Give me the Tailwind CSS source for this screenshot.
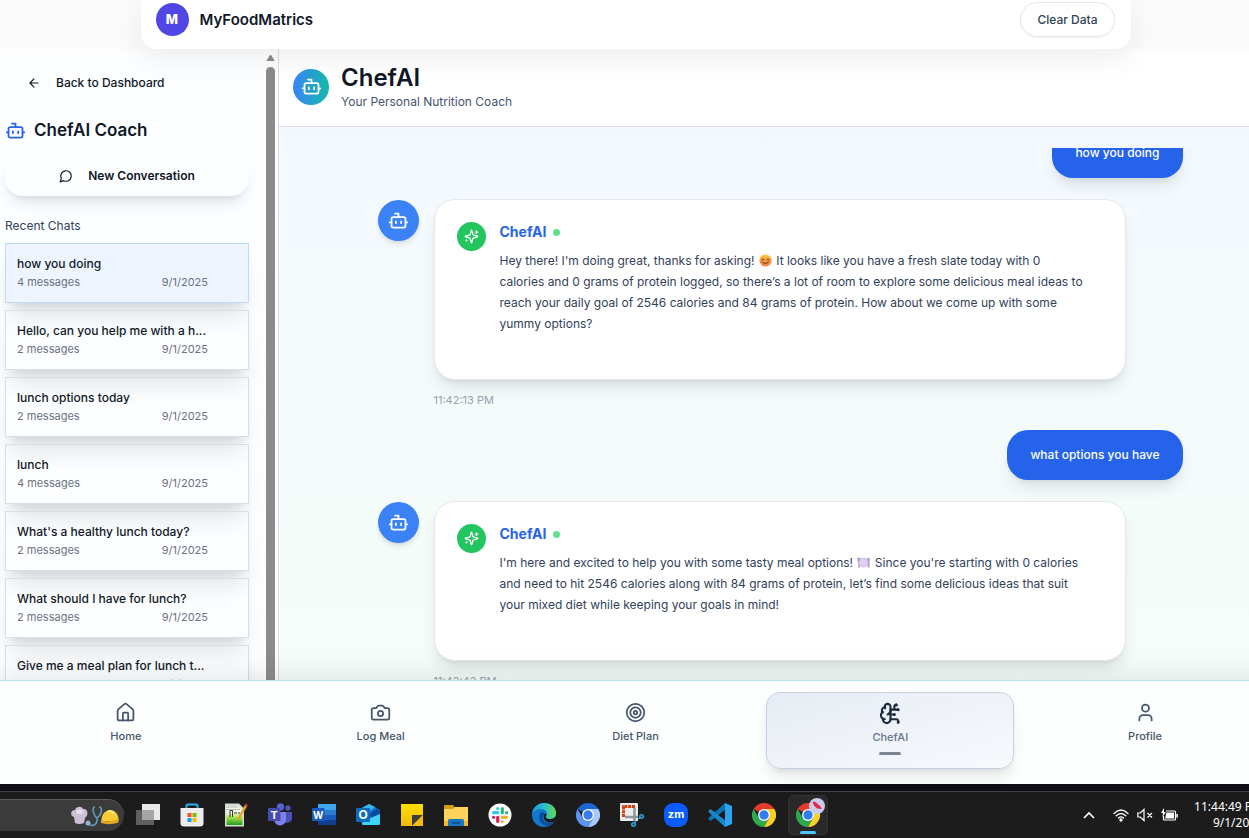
<!DOCTYPE html>
<html lang="en">
<head>
<meta charset="utf-8">
<title>MyFoodMatrics – ChefAI</title>
<script src="https://cdn.jsdelivr.net/npm/@tailwindcss/browser@4"></script>
</head>
<body class="h-screen overflow-hidden bg-white font-['Inter',sans-serif] text-xs text-gray-900">
<svg class="hidden" aria-hidden="true">
  <symbol id="bot" viewBox="0 0 24 24" fill="none" stroke="currentColor" stroke-width="2" stroke-linecap="round" stroke-linejoin="round"><path d="M12 8V4H8"/><rect x="4" y="8" width="16" height="12" rx="2"/><path d="M2 14h2M20 14h2M15 13v2M9 13v2"/></symbol>
  <symbol id="sparkles" viewBox="0 0 24 24" fill="none" stroke="currentColor" stroke-width="2" stroke-linecap="round" stroke-linejoin="round"><path d="M9.937 15.5A2 2 0 0 0 8.5 14.063l-6.135-1.582a.5.5 0 0 1 0-.962L8.5 9.936A2 2 0 0 0 9.937 8.5l1.582-6.135a.5.5 0 0 1 .963 0L14.063 8.5A2 2 0 0 0 15.5 9.937l6.135 1.581a.5.5 0 0 1 0 .964L15.5 14.063a2 2 0 0 0-1.437 1.437l-1.582 6.135a.5.5 0 0 1-.963 0z"/><path d="M20 3v4M22 5h-4M4 17v2M5 18H3"/></symbol>
  <symbol id="chrome" viewBox="0 0 24 24"><path fill="#e33b2e" d="M12 12 1.6 6A12 12 0 0 1 22.4 6H12z"/><path fill="#2da94f" d="M12 24A12 12 0 0 1 1.6 6l5.2 9L12 18l5.2-3z"/><path fill="#fdd023" d="M22.4 6A12 12 0 0 1 12 24l5.2-9L17 9l-5-3z"/><circle cx="12" cy="12" r="6" fill="#fff"/><circle cx="12" cy="12" r="4.7" fill="#2f7df0"/></symbol>
</svg>

<div class="-mr-[22px] flex h-full flex-col">
  <!-- Site header -->
  <header class="relative z-10 h-[49px] shrink-0 bg-[#fbfbfb]">
    <div class="mx-auto flex h-full max-w-[990px] items-center justify-between rounded-b-2xl bg-white pr-4 pb-[10px] pl-[15px] shadow-[0_8px_30px_rgba(0,0,0,0.08)]">
      <div class="flex items-center gap-[11px]">
        <span class="flex size-[33px] items-center justify-center rounded-full bg-[#4f46e5] text-[13px] font-extrabold text-white">M</span>
        <span class="text-[15px] font-semibold">MyFoodMatrics</span>
      </div>
      <button class="h-[35px] shrink-0 rounded-full border border-slate-200 bg-white px-4 font-medium text-slate-700 shadow-xs">Clear Data</button>
    </div>
  </header>

  <div class="flex min-h-0 flex-1">
    <!-- Conversation list -->
    <aside class="flex w-[279px] shrink-0 overflow-hidden border-r border-[#d9dde8] bg-[#fdfeff]">
      <div class="w-[266px] overflow-hidden pr-[17px] pl-[5px]">
        <button class="mt-[22px] flex h-6 items-center gap-[15px] pl-[22px] font-medium">
          <svg class="size-[14px]" viewBox="0 0 24 24" fill="none" stroke="currentColor" stroke-width="2" stroke-linecap="round" stroke-linejoin="round"><path d="m12 19-7-7 7-7M19 12H5"/></svg>
          Back to Dashboard
        </button>
        <h2 class="mt-[23px] flex h-6 items-center gap-2 text-[17px] font-semibold"><svg class="size-[21px] text-[#2563eb]"><use href="#bot"/></svg>ChefAI Coach</h2>
        <button class="mt-[13px] flex h-[41px] w-full items-center justify-center gap-[15px] rounded-[18px] font-semibold shadow-[0_10px_18px_-6px_rgba(0,0,0,0.14),0_4px_6px_-4px_rgba(0,0,0,0.1)]">
          <svg class="size-[14px]" viewBox="0 0 24 24" fill="none" stroke="currentColor" stroke-width="2" stroke-linecap="round" stroke-linejoin="round"><path d="M7.9 20A9 9 0 1 0 4 16.1L2 22Z"/></svg>
          New Conversation
        </button>
        <h3 class="mt-5 h-5 leading-5 text-slate-700">Recent Chats</h3>
        <div class="mt-[7px] flex flex-col gap-[7px]">
          <button class="h-[60px] border border-blue-200 bg-[#eff5ff] pr-10 pb-[2px] pl-[11px] text-left shadow-xl"><span class="block truncate leading-5 font-medium">how you doing</span><span class="flex justify-between text-[11px] leading-4 text-gray-500"><span>4 messages</span><span>9/1/2025</span></span></button>
          <button class="h-[60px] border border-[#d9dde8] pr-10 pb-[2px] pl-[11px] text-left shadow-xl"><span class="block truncate leading-5 font-medium">Hello, can you help me with a h...</span><span class="flex justify-between text-[11px] leading-4 text-gray-500"><span>2 messages</span><span>9/1/2025</span></span></button>
          <button class="h-[60px] border border-[#d9dde8] pr-10 pb-[2px] pl-[11px] text-left shadow-xl"><span class="block truncate leading-5 font-medium">lunch options today</span><span class="flex justify-between text-[11px] leading-4 text-gray-500"><span>2 messages</span><span>9/1/2025</span></span></button>
          <button class="h-[60px] border border-[#d9dde8] pr-10 pb-[2px] pl-[11px] text-left shadow-xl"><span class="block truncate leading-5 font-medium">lunch</span><span class="flex justify-between text-[11px] leading-4 text-gray-500"><span>4 messages</span><span>9/1/2025</span></span></button>
          <button class="h-[60px] border border-[#d9dde8] pr-10 pb-[2px] pl-[11px] text-left shadow-xl"><span class="block truncate leading-5 font-medium">What's a healthy lunch today?</span><span class="flex justify-between text-[11px] leading-4 text-gray-500"><span>2 messages</span><span>9/1/2025</span></span></button>
          <button class="h-[60px] border border-[#d9dde8] pr-10 pb-[2px] pl-[11px] text-left shadow-xl"><span class="block truncate leading-5 font-medium">What should I have for lunch?</span><span class="flex justify-between text-[11px] leading-4 text-gray-500"><span>2 messages</span><span>9/1/2025</span></span></button>
          <button class="h-[60px] border border-[#d9dde8] pr-10 pb-[2px] pl-[11px] text-left shadow-xl"><span class="block truncate leading-5 font-medium">Give me a meal plan for lunch t...</span><span class="flex justify-between text-[11px] leading-4 text-gray-500"><span>2 messages</span><span>9/1/2025</span></span></button>
        </div>
      </div>
      <div class="flex w-[9px] flex-col items-center pt-[5px]">
        <svg class="h-2 w-[9px]" viewBox="0 0 9 8"><path d="M4.500 1 8 6.500H1z" fill="#8b8b8b" stroke="#8b8b8b" stroke-linejoin="round"/></svg>
        <div class="mt-[5px] w-full flex-1 rounded-t-full bg-[#8b8b8b]"></div>
      </div>
    </aside>

    <!-- Chat -->
    <main class="flex min-w-0 flex-1 flex-col bg-linear-to-b from-[#f3f8fe] to-[#f4fdf9]">
      <div class="flex h-[78px] shrink-0 items-center gap-3 border-b border-[#d6dbe5] bg-white pb-[2px] pl-[14px]">
        <span class="flex size-9 items-center justify-center rounded-full bg-linear-to-r from-[#3b82f6] to-[#14b8a6] text-white"><svg class="size-[21px]"><use href="#bot"/></svg></span>
        <div>
          <h1 class="text-2xl leading-[30px] font-semibold">ChefAI</h1>
          <p class="leading-[18px] text-slate-600">Your Personal Nutrition Coach</p>
        </div>
      </div>
      <div class="flex min-h-0 flex-1 flex-col pt-[21px] pl-[10px]">
        <div class="min-h-0 flex-1 overflow-hidden">
          <div class="mx-auto -mt-5 flex max-w-[805px] flex-col">
            <div class="flex h-[50px] items-center self-end rounded-[21px] bg-[#2563eb] px-[23px] font-medium text-white shadow-lg">how you doing</div>

            <div class="mt-[21px] flex items-start gap-[15px]">
              <span class="mt-px flex size-[41px] shrink-0 items-center justify-center rounded-full bg-[#3b82f6] text-white shadow-md"><svg class="size-[21px]"><use href="#bot"/></svg></span>
              <div class="w-[692px]">
                <article class="flex gap-[14px] rounded-[21px] border border-gray-200 bg-white px-[22px] pt-[22px] pb-[45px] shadow-lg">
                  <span class="flex size-[29px] shrink-0 items-center justify-center rounded-full bg-[#22c55e] text-white"><svg class="size-[15px]"><use href="#sparkles"/></svg></span>
                  <div>
                    <h4 class="flex h-[21px] items-center gap-[7px] text-[14px] font-bold text-[#2563eb]">ChefAI<span class="size-[7px] rounded-full bg-[#63e08f]"></span></h4>
                    <p class="mt-[7px] leading-[21px] text-slate-700">Hey there! I'm doing great, thanks for asking!
                      <svg class="mx-px inline size-[13px] align-[-2px]" viewBox="0 0 16 16" role="img" aria-label="smiling face"><defs><linearGradient id="face" x2="0" y2="1"><stop stop-color="#ffc83d"/><stop offset="1" stop-color="#f47b43"/></linearGradient></defs><circle cx="8" cy="8" r="7.500" fill="url(#face)"/><circle cx="3.500" cy="9" r="2" fill="#ff6b57" opacity=".4"/><circle cx="12.500" cy="9" r="2" fill="#ff6b57" opacity=".4"/><path d="M3.500 7q1.500-2.500 3 0M9.500 7q1.500-2.500 3 0M4.500 10q3.500 3.500 7 0" fill="none" stroke="#5a2b1c" stroke-width="1.200" stroke-linecap="round"/></svg>
                      It looks like you have a fresh slate today with 0<br>calories and 0 grams of protein logged, so there’s a lot of room to explore some delicious meal ideas to<br>reach your daily goal of 2546 calories and 84 grams of protein. How about we come up with some<br>yummy options?</p>
                  </div>
                </article>
                <time class="mt-3 block h-4 text-[11px] leading-4 text-gray-400">11:42:13 PM</time>
              </div>
            </div>

            <div class="mt-[22px] flex h-[50px] items-center self-end rounded-[21px] bg-[#2563eb] px-[23px] font-medium text-white shadow-lg">what options you have</div>

            <div class="mt-[21px] flex items-start gap-[15px]">
              <span class="mt-px flex size-[41px] shrink-0 items-center justify-center rounded-full bg-[#3b82f6] text-white shadow-md"><svg class="size-[21px]"><use href="#bot"/></svg></span>
              <div class="w-[692px]">
                <article class="flex gap-[14px] rounded-[21px] border border-gray-200 bg-white px-[22px] pt-[22px] pb-[45px] shadow-lg">
                  <span class="flex size-[29px] shrink-0 items-center justify-center rounded-full bg-[#22c55e] text-white"><svg class="size-[15px]"><use href="#sparkles"/></svg></span>
                  <div>
                    <h4 class="flex h-[21px] items-center gap-[7px] text-[14px] font-bold text-[#2563eb]">ChefAI<span class="size-[7px] rounded-full bg-[#63e08f]"></span></h4>
                    <p class="mt-[7px] leading-[21px] text-slate-700">I'm here and excited to help you with some tasty meal options!
                      <svg class="mx-px inline size-[13px] align-[-2px]" viewBox="0 0 16 16" role="img" aria-label="plate with fork and knife"><path d="M.5 2h4v4l-1 2v6H1.500V8l-1-2zM15.500 2v12h-2L12 8V3z" fill="#aaa0b8"/><circle cx="8" cy="8" r="6" fill="#d6c4ee"/><circle cx="8" cy="8" r="3.800" fill="#e0d3f4"/></svg>
                      Since you're starting with 0 calories<br>and need to hit 2546 calories along with 84 grams of protein, let’s find some delicious ideas that suit<br>your mixed diet while keeping your goals in mind!</p>
                  </div>
                </article>
                <time class="mt-3 block h-4 text-[11px] leading-4 text-gray-400">11:42:42 PM</time>
              </div>
            </div>
          </div>
        </div>
      </div>
    </main>
  </div>

  <!-- Bottom navigation -->
  <nav class="relative grid h-[104px] shrink-0 grid-cols-5 gap-[7px] border-t border-[#b9e4ef] bg-[#fdfefe] px-[2px] pt-[11px] pb-[15px] text-[11px] font-medium text-slate-600 shadow-[0_-6px_24px_rgba(0,0,0,0.09)]">
    <a href="#" class="flex flex-col items-center gap-[6px] pt-[10px]"><svg class="size-[21px]" viewBox="0 0 24 24" fill="none" stroke="currentColor" stroke-width="2" stroke-linecap="round" stroke-linejoin="round"><path d="M15 21v-8a1 1 0 0 0-1-1h-4a1 1 0 0 0-1 1v8"/><path d="M3 10a2 2 0 0 1 .709-1.528l7-5.999a2 2 0 0 1 2.582 0l7 5.999A2 2 0 0 1 21 10v9a2 2 0 0 1-2 2H5a2 2 0 0 1-2-2z"/></svg>Home</a>
    <a href="#" class="flex flex-col items-center gap-[6px] pt-[10px]"><svg class="size-[21px]" viewBox="0 0 24 24" fill="none" stroke="currentColor" stroke-width="2" stroke-linecap="round" stroke-linejoin="round"><path d="M14.500 4h-5L7 7H4a2 2 0 0 0-2 2v9a2 2 0 0 0 2 2h16a2 2 0 0 0 2-2V9a2 2 0 0 0-2-2h-3l-2.500-3z"/><circle cx="12" cy="13" r="3"/></svg>Log Meal</a>
    <a href="#" class="flex flex-col items-center gap-[6px] pt-[10px]"><svg class="size-[21px]" viewBox="0 0 24 24" fill="none" stroke="currentColor" stroke-width="2"><circle cx="12" cy="12" r="10"/><circle cx="12" cy="12" r="6"/><circle cx="12" cy="12" r="2"/></svg>Diet Plan</a>
    <a href="#" aria-current="page" class="flex flex-col items-center gap-[5px] rounded-[14px] border border-[#c5d1e3] bg-linear-to-br from-[#e7ecf4] to-[#f7f9fd] pt-[9px] text-slate-500 shadow-lg"><svg class="size-[23px] text-slate-800" viewBox="0 0 24 24" fill="none" stroke="currentColor" stroke-width="2.200" stroke-linecap="round" stroke-linejoin="round"><path d="M12 5a3 3 0 1 0-5.997.125 4 4 0 0 0-2.526 5.770 4 4 0 0 0 .556 6.588A4 4 0 1 0 12 18Z"/><path d="M9 13a4.500 4.500 0 0 0 3-4M6.003 5.125A3 3 0 0 0 6.401 6.500M3.477 10.896a4 4 0 0 1 .585-.396M6 18a4 4 0 0 1-1.967-.516M12 13h4M12 18h6a2 2 0 0 1 2 2v1M12 8h8M16 8V5a2 2 0 0 1 2-2"/><circle cx="16" cy="13" r=".5"/><circle cx="18" cy="3" r=".5"/><circle cx="20" cy="21" r=".5"/><circle cx="20" cy="8" r=".5"/></svg>ChefAI<span class="mt-[2px] h-[3px] w-[22px] rounded-full bg-[#7c8493]"></span></a>
    <a href="#" class="flex flex-col items-center gap-[6px] pt-[10px]"><svg class="size-[21px]" viewBox="0 0 24 24" fill="none" stroke="currentColor" stroke-width="2" stroke-linecap="round" stroke-linejoin="round"><path d="M19 21v-2a4 4 0 0 0-4-4H9a4 4 0 0 0-4 4v2"/><circle cx="12" cy="7" r="4"/></svg>Profile</a>
  </nav>

  <!-- Desktop taskbar -->
  <div class="h-[7px] shrink-0 bg-[#100f19]"></div>
  <footer class="flex h-[47px] shrink-0 items-center border-t border-[#424244] bg-[#1c1c1c]">
    <div class="flex h-8 w-[124px] items-center justify-end rounded-r-full border-t border-[#5c5c5c] bg-[#3b3b3b] pr-[5px]">
      <svg class="h-[22px] w-12" viewBox="0 0 48 22"><path d="M4 18 3 12C-1 11-1 5 4 5c1-4 7-4 8-1 5-1 6 6 2 9l-1 5q-5 2-9 0z" fill="#cdbfd3"/><path d="M5 6q5-4 8 1-3 4-8 1z" fill="#e7dcea"/><path d="M24 2c-3 0-2 5 0 9l2 2 3-3c2-4 2-8-1-8M26 13c1 9-7 8-9 6" fill="none" stroke="#5f97b8" stroke-width="1.700"/><circle cx="17" cy="18" r="2.500" fill="#8bb5cb"/><path d="M30.500 16C30 10 34 5 39 5s9 4 8.500 11z" fill="#f7cb38"/><path d="M30 15.500q9 2 17.500-1.500v3.500q-9 3-17.500.5z" fill="#e3a822"/><path d="M37 6.500q4-1 6 2" stroke="#ffe98a" stroke-width="2" fill="none"/></svg>
    </div>
    <div class="ml-[2px] flex items-center">
      <button aria-label="Task View" class="flex h-10 w-11 items-center justify-center"><svg class="size-6" viewBox="0 0 24 24"><path fill="#e9e9e9" d="M6 1h18v16H6z"/><path fill="#5f5f5f" d="M0 7h18v15H0z"/><path fill="#a5a5a5" d="M6 7h12v10H6z"/></svg></button>
      <button aria-label="Store" class="flex h-10 w-11 items-center justify-center"><svg class="size-6" viewBox="0 0 24 24"><path d="M6.500 7V3q0-1.500 1.500-1.500h8q1.500 0 1.500 1.500v4" fill="none" stroke="#29b0ee" stroke-width="2"/><path d="M.5 5h23v15q0 3.500-3.500 3.500H4Q.5 23.500.5 20z" fill="#ececec"/><path fill="#f25022" d="M7.500 10H11.500v4h-4z"/><path fill="#7fba00" d="M12.500 10h4v4h-4z"/><path fill="#00a4ef" d="M7.500 15h4v4h-4z"/><path fill="#ffb900" d="M12.500 15h4v4h-4z"/></svg></button>
      <button aria-label="Notepad++" class="flex h-10 w-11 items-center justify-center"><svg class="size-6" viewBox="0 0 24 24"><defs><linearGradient id="npp" x2="0" y2="1"><stop offset=".35" stop-color="#f2f6e6"/><stop offset=".6" stop-color="#a9e04c"/><stop offset="1" stop-color="#1f9d1e"/></linearGradient></defs><path d="M1 .5h14l5 5v18H1z" fill="#d9ded6"/><path d="M2.500 3h12l4 4v15h-16z" fill="url(#npp)"/><path d="M2 4h12M2 6.500h14" stroke="#b5bdb5"/><path d="M6 7v7M6.500 7.500h2v6.500M10 10h3M14 10h2" stroke="#333" fill="none"/><path d="m13 18 1-4 7.500-13 2 1.500-7.500 13z" fill="#eaa527"/><path d="m20.500 2.500 1-2 2 1.500-1 2z" fill="#c83c34"/></svg></button>
      <button aria-label="Teams" class="flex h-10 w-11 items-center justify-center"><svg class="size-6" viewBox="0 0 24 24"><circle cx="12.500" cy="4" r="3.700" fill="#5b62c9"/><circle cx="20" cy="5" r="2.700" fill="#4e55b8"/><path d="M17 9h7v7q-1 4-7 4z" fill="#4a50b5"/><path d="M7 9h11v8q-1 5-6 5.500Q7 22 6 17z" fill="#7b83eb"/><rect y="5" width="12.500" height="13" rx="1" fill="#464bb1"/><text x="6.250" y="15.500" font-size="11" font-weight="700" fill="#fff" text-anchor="middle">T</text></svg></button>
      <button aria-label="Word" class="flex h-10 w-11 items-center justify-center"><svg class="size-6" viewBox="0 0 24 24"><path fill="#41a5ee" d="M6 1h18v6H6z"/><path fill="#2b7cd3" d="M6 7h18v5H6z"/><path fill="#185abd" d="M6 12h18v5H6z"/><path fill="#103f91" d="M6 17h18v5H6z"/><rect y="5" width="12.500" height="13" rx="1" fill="#185abd"/><text x="6.250" y="15.500" font-size="10" font-weight="700" fill="#fff" text-anchor="middle">W</text></svg></button>
      <button aria-label="Outlook" class="flex h-10 w-11 items-center justify-center"><svg class="size-6" viewBox="0 0 24 24"><path fill="#1580d8" d="M4 6 13 1l11 6v15H6z"/><path fill="#35b8f1" d="M4 6 13 1l6 3L7 12z"/><path fill="#0a4aa0" d="m12 12 9-7 3 3v3l-8 4z"/><path fill="#3fd3f5" d="m10 17 14-6v9q0 2-2 2H8q-2 0-2-2z"/><rect y="5" width="14" height="14" rx="1" fill="#0f6cbd"/><text x="7" y="16" font-size="12" font-weight="700" fill="#fff" text-anchor="middle">O</text></svg></button>
      <button aria-label="Sticky Notes" class="flex h-10 w-11 items-center justify-center"><svg class="size-6" viewBox="0 0 24 24"><defs><linearGradient id="note" x2="0" y2="1"><stop stop-color="#ffe000"/><stop offset="1" stop-color="#f2b70c"/></linearGradient></defs><path fill="url(#note)" d="M1 1h22v22H1z"/><path fill="#3d3d3d" d="M12 12h11L12 23z"/><path fill="#f4bb15" d="M23 12v11H12z"/></svg></button>
      <button aria-label="File Explorer" class="flex h-10 w-11 items-center justify-center"><svg class="size-6" viewBox="0 0 24 24"><path fill="#d99b13" d="M0 3q0-1 1-1h8l3 4H0z"/><path fill="#ffd35c" d="M0 6h9l2-2h13v19H0z"/><path fill="#f5b829" d="M0 18h24v5H0z"/><path fill="#1975c5" d="M4 23v-5q0-2 2-2h12q2 0 2 2v5z"/><path fill="#0f5596" d="M8 19h8v2H8z"/></svg></button>
      <button aria-label="Slack" class="flex h-10 w-11 items-center justify-center"><svg class="size-6" viewBox="0 0 24 24"><circle cx="12" cy="12" r="11.500" fill="#fff"/><g stroke-width="3.200" stroke-linecap="round"><path stroke="#36c5f0" d="M9.700 5.500v.1M5.500 9.700h4.200"/><path stroke="#2eb67d" d="M14.300 5.500v4.200M18.500 9.700h.1"/><path stroke="#ecb22e" d="M14.300 14.300h4.200M14.300 18.500v.1"/><path stroke="#e01e5a" d="M9.700 14.300v4.200M5.500 14.300h.1"/></g></svg></button>
      <button aria-label="Edge" class="flex h-10 w-11 items-center justify-center"><svg class="size-6" viewBox="0 0 24 24"><defs><linearGradient id="edge" x2="1" y2="0"><stop stop-color="#1899dd"/><stop offset=".5" stop-color="#2bbfd0"/><stop offset="1" stop-color="#64d84a"/></linearGradient></defs><circle cx="12" cy="12" r="12" fill="#1577cc"/><path d="M0 11C1 4 6 0 12 0c7 0 12 4 12 10 0 4-3 6-6 6-4 0-5-2-3.500-4C16 8 12 6 9 6 5 6 1 8 0 11z" fill="url(#edge)"/><path d="M9 9c-4 4-2 13 6 14 3 0 6-2 7-4-8 3-13-2-10-7 1-2 0-3-3-3z" fill="#0c4f9e"/><path d="M14.500 12C13 14 14 16 18 16c3 0 5-1 6-3 0 3-1 5-2 6-7 2-11-2-10-6 0-3 3-3 2.500-1z" fill="#1c1c1c"/></svg></button>
      <button aria-label="Chromium" class="flex h-10 w-11 items-center justify-center"><svg class="size-6" viewBox="0 0 24 24"><path fill="#1b66d2" d="M12 12 1.600 6A12 12 0 0 1 22.400 6H12z"/><path fill="#5a94ee" d="M12 24A12 12 0 0 1 1.600 6l5.200 9L12 18l5.200-3z"/><path fill="#a9c9fb" d="M22.400 6A12 12 0 0 1 12 24l5.200-9L17 9l-5-3z"/><circle cx="12" cy="12" r="6" fill="#fff"/><circle cx="12" cy="12" r="4.700" fill="#3a7cec"/></svg></button>
      <button aria-label="Snipping Tool" class="flex h-10 w-11 items-center justify-center"><svg class="size-6" viewBox="0 0 24 24"><rect width="18" height="18" rx="1" fill="#ececec"/><path d="M3.500 14V3.500H15" fill="none" stroke="#d1400e" stroke-width="3" stroke-dasharray="3 .8"/><path d="M5 14h13M14.500 5v13" stroke="#8f979c" stroke-width="2.500"/><g fill="none" stroke="#2aa5dc" stroke-width="1.600"><circle cx="21.500" cy="13.500" r="1.700"/><circle cx="13.500" cy="21.500" r="1.700"/><path d="m20 15-2 .5M15 20l.5-2"/></g></svg></button>
      <button aria-label="Zoom" class="flex h-10 w-11 items-center justify-center"><span class="flex size-6 items-center justify-center rounded-[9px] bg-[#0b5cff] pb-[2px] text-[11px] font-bold text-white">zm</span></button>
      <button aria-label="VS Code" class="flex h-10 w-11 items-center justify-center"><svg class="size-6" viewBox="0 0 24 24"><path d="M17 0 0 15.500 2.500 18 18 6z" fill="#0b73b8"/><path d="M17 24 0 8.500 2.500 6 18 18z" fill="#1688cc"/><path d="m17 0 7 3v18l-7 3z" fill="#28a5ee"/></svg></button>
      <button aria-label="Chrome" class="flex h-10 w-11 items-center justify-center"><svg class="size-6"><use href="#chrome"/></svg></button>
      <button aria-label="Chrome, active window" class="relative mx-[2px] flex size-10 items-center justify-center rounded-[5px] border border-[#333] bg-[#292929]"><svg class="size-6"><use href="#chrome"/></svg><svg class="absolute top-[2px] right-[2px] size-4" viewBox="0 0 16 16"><circle cx="8" cy="8" r="8" fill="#c9cde9"/><path d="m3.500 3.500 3 .5 5 4.500 1.500 2.500-5-.5-3-3z" fill="#e8274b"/></svg><span class="absolute bottom-0 left-[11px] h-[3px] w-4 rounded-full bg-[#4cc2ff]"></span></button>
    </div>
    <div class="ml-auto flex items-center pr-2 text-white">
      <svg class="h-3 w-[12px]" viewBox="0 0 12 12" fill="none" stroke="currentColor" stroke-width="1.600"><path d="m1 9 5-5 5 5"/></svg>
      <svg class="ml-[18px] h-[14px] w-4" viewBox="0 0 16 14" fill="none" stroke="currentColor" stroke-width="1.300" stroke-linecap="round"><path d="M1 5.500q7-7 14 0M3.200 7.800q4.800-4.600 9.600 0M5.500 10q2.500-2.200 5 0"/><circle cx="8" cy="12" r="1" fill="currentColor"/></svg>
      <svg class="ml-2 h-[14px] w-4" viewBox="0 0 16 14" fill="none" stroke="currentColor" stroke-width="1.200"><path d="M.8 5v4h2.500L7 12.500v-11L3.300 5zM10.500 5l4.500 4.500M15 5l-4.500 4.500"/></svg>
      <svg class="ml-2 h-[14px] w-[17px]" viewBox="0 0 17 14"><path d="M5 3h8.500q1 0 1 1v7q0 1-1 1h-10q-1 0-1-1V8" fill="none" stroke="#fff" stroke-width="1.200"/><path d="M5.500 4.500H13v6H4zM15.300 6h1.500v3.500h-1.500zM3 0 0 5h2L1.500 9 5 4H3z" fill="#fff"/></svg>
      <div class="ml-4 text-right font-['Noto_Sans',sans-serif] text-[12px] leading-4">11:44:49 PM<br>9/1/2025</div>
    </div>
  </footer>
</div>
</body>
</html>
